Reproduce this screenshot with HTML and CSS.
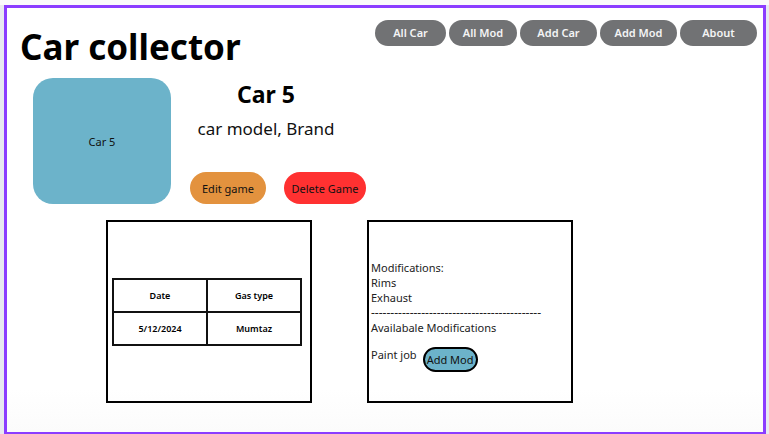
FILE: index.html
```html
<!DOCTYPE html>
<html lang="en">
<head>
<meta charset="utf-8">
<meta name="viewport" content="width=device-width, initial-scale=1">
<title>Car collector</title>
<link rel="stylesheet" href="styles.css">
</head>
<body>
<div class="frame">
  <header class="header">
    <h1 class="title">Car collector</h1>
    <nav class="nav">
      <a class="nav-link" href="#all-car">All Car</a>
      <a class="nav-link nav-narrow" href="#all-mod">All Mod</a>
      <a class="nav-link nav-wide" href="#add-car">Add Car</a>
      <a class="nav-link nav-wide" href="#add-mod">Add Mod</a>
      <a class="nav-link nav-wide" href="#about">About</a>
    </nav>
  </header>
  <main>
    <section class="hero">
      <div class="photo">Car 5</div>
      <div class="details">
        <div class="heading">
          <h2 class="car-name">Car 5</h2>
          <p class="car-model">car model, Brand</p>
        </div>
        <div class="actions">
          <button class="action edit" type="button">Edit game</button>
          <button class="action delete" type="button">Delete Game</button>
        </div>
      </div>
    </section>
    <section class="panels">
      <div class="panel">
        <table class="fuel">
          <thead><tr><th>Date</th><th>Gas type</th></tr></thead>
          <tbody><tr><td>5/12/2024</td><td>Mumtaz</td></tr></tbody>
        </table>
      </div>
      <div class="panel mods">
        <p>Modifications:</p>
        <p>Rims</p>
        <p>Exhaust</p>
        <p class="divider">--------------------------------------------</p>
        <p>Availabale Modifications</p>
        <div class="available">
          <span>Paint job</span>
          <button class="add-mod" type="button">Add Mod</button>
        </div>
      </div>
    </section>
  </main>
</div>
</body>
</html>
```

FILE: styles.css
```css
* {
  box-sizing: border-box;
}

body {
  margin: 0;
  padding: 5px 3px 0 4px;
  min-height: 100vh;
  display: flex;
  background: linear-gradient(#fafafb 5px, #e8e9f0 5px);
  color: #000;
  font-family: "Noto Sans", sans-serif;
  font-size: 11px;
}

h1, h2, p {
  margin: 0;
}

button {
  font: inherit;
  color: #111;
  cursor: pointer;
}

.frame {
  flex: 1;
  border: 3px solid #8b3dff;
  border-bottom-width: 2px;
  background: linear-gradient(#fff 90%, #fbfbfb);
}

.header {
  display: flex;
  justify-content: space-between;
  align-items: flex-start;
  padding: 12px 6px 0 13px;
}

.title {
  padding-top: 1px;
  font-size: 35px;
  line-height: 52px;
  font-weight: 700;
}

.nav {
  display: flex;
  gap: 3px;
}

.nav-link {
  width: 71px;
  border-radius: 13px;
  background: #717274;
  color: #f4f4f4;
  font-weight: 600;
  line-height: 26px;
  text-align: center;
  text-decoration: none;
}

.nav-narrow {
  width: 68px;
}

.nav-wide {
  width: 77px;
}

.hero {
  display: flex;
  gap: 19px;
  padding: 5px 26px 0;
}

.photo {
  display: flex;
  align-items: center;
  justify-content: center;
  width: 138px;
  height: 126px;
  border-radius: 20px;
  background: #6cb3ca;
  color: #111;
}

.details {
  display: flex;
  flex-direction: column;
  justify-content: space-between;
}

.heading {
  width: 152px;
  text-align: center;
}

.car-name {
  font-size: 23px;
  line-height: 32px;
  font-weight: 700;
}

.car-model {
  padding-top: 6px;
  font-size: 17px;
  line-height: 26px;
  color: #111;
  white-space: nowrap;
}

.actions {
  display: flex;
  gap: 18px;
}

.action {
  height: 32px;
  padding: 0;
  border: 0;
  border-radius: 16px;
}

.edit {
  width: 76px;
  background: #e3923e;
}

.delete {
  width: 82px;
  background: #ff3131;
}

.panels {
  display: flex;
  gap: 55px;
  padding: 16px 99px 28px;
}

.panel {
  display: flex;
  flex-direction: column;
  justify-content: center;
  width: 206px;
  height: 183px;
  padding: 0 4px;
  border: 2px solid #000;
}

.fuel {
  width: 190px;
  border-collapse: collapse;
  table-layout: fixed;
  font-size: 9px;
  font-weight: 600;
  text-align: center;
}

.fuel th,
.fuel td {
  height: 33px;
  padding: 0;
  border: 2px solid #111;
  font-weight: 600;
}

.mods {
  padding: 8px 2px 0;
  line-height: 15px;
  color: #222;
  white-space: nowrap;
}

.divider {
  font-size: 12px;
}

.available {
  display: flex;
  align-items: flex-start;
  gap: 6px;
  padding-top: 12px;
}

.add-mod {
  width: 55px;
  height: 25px;
  padding: 0;
  border: 2px solid #000;
  border-radius: 13px;
  background: #6cb3ca;
}
```
